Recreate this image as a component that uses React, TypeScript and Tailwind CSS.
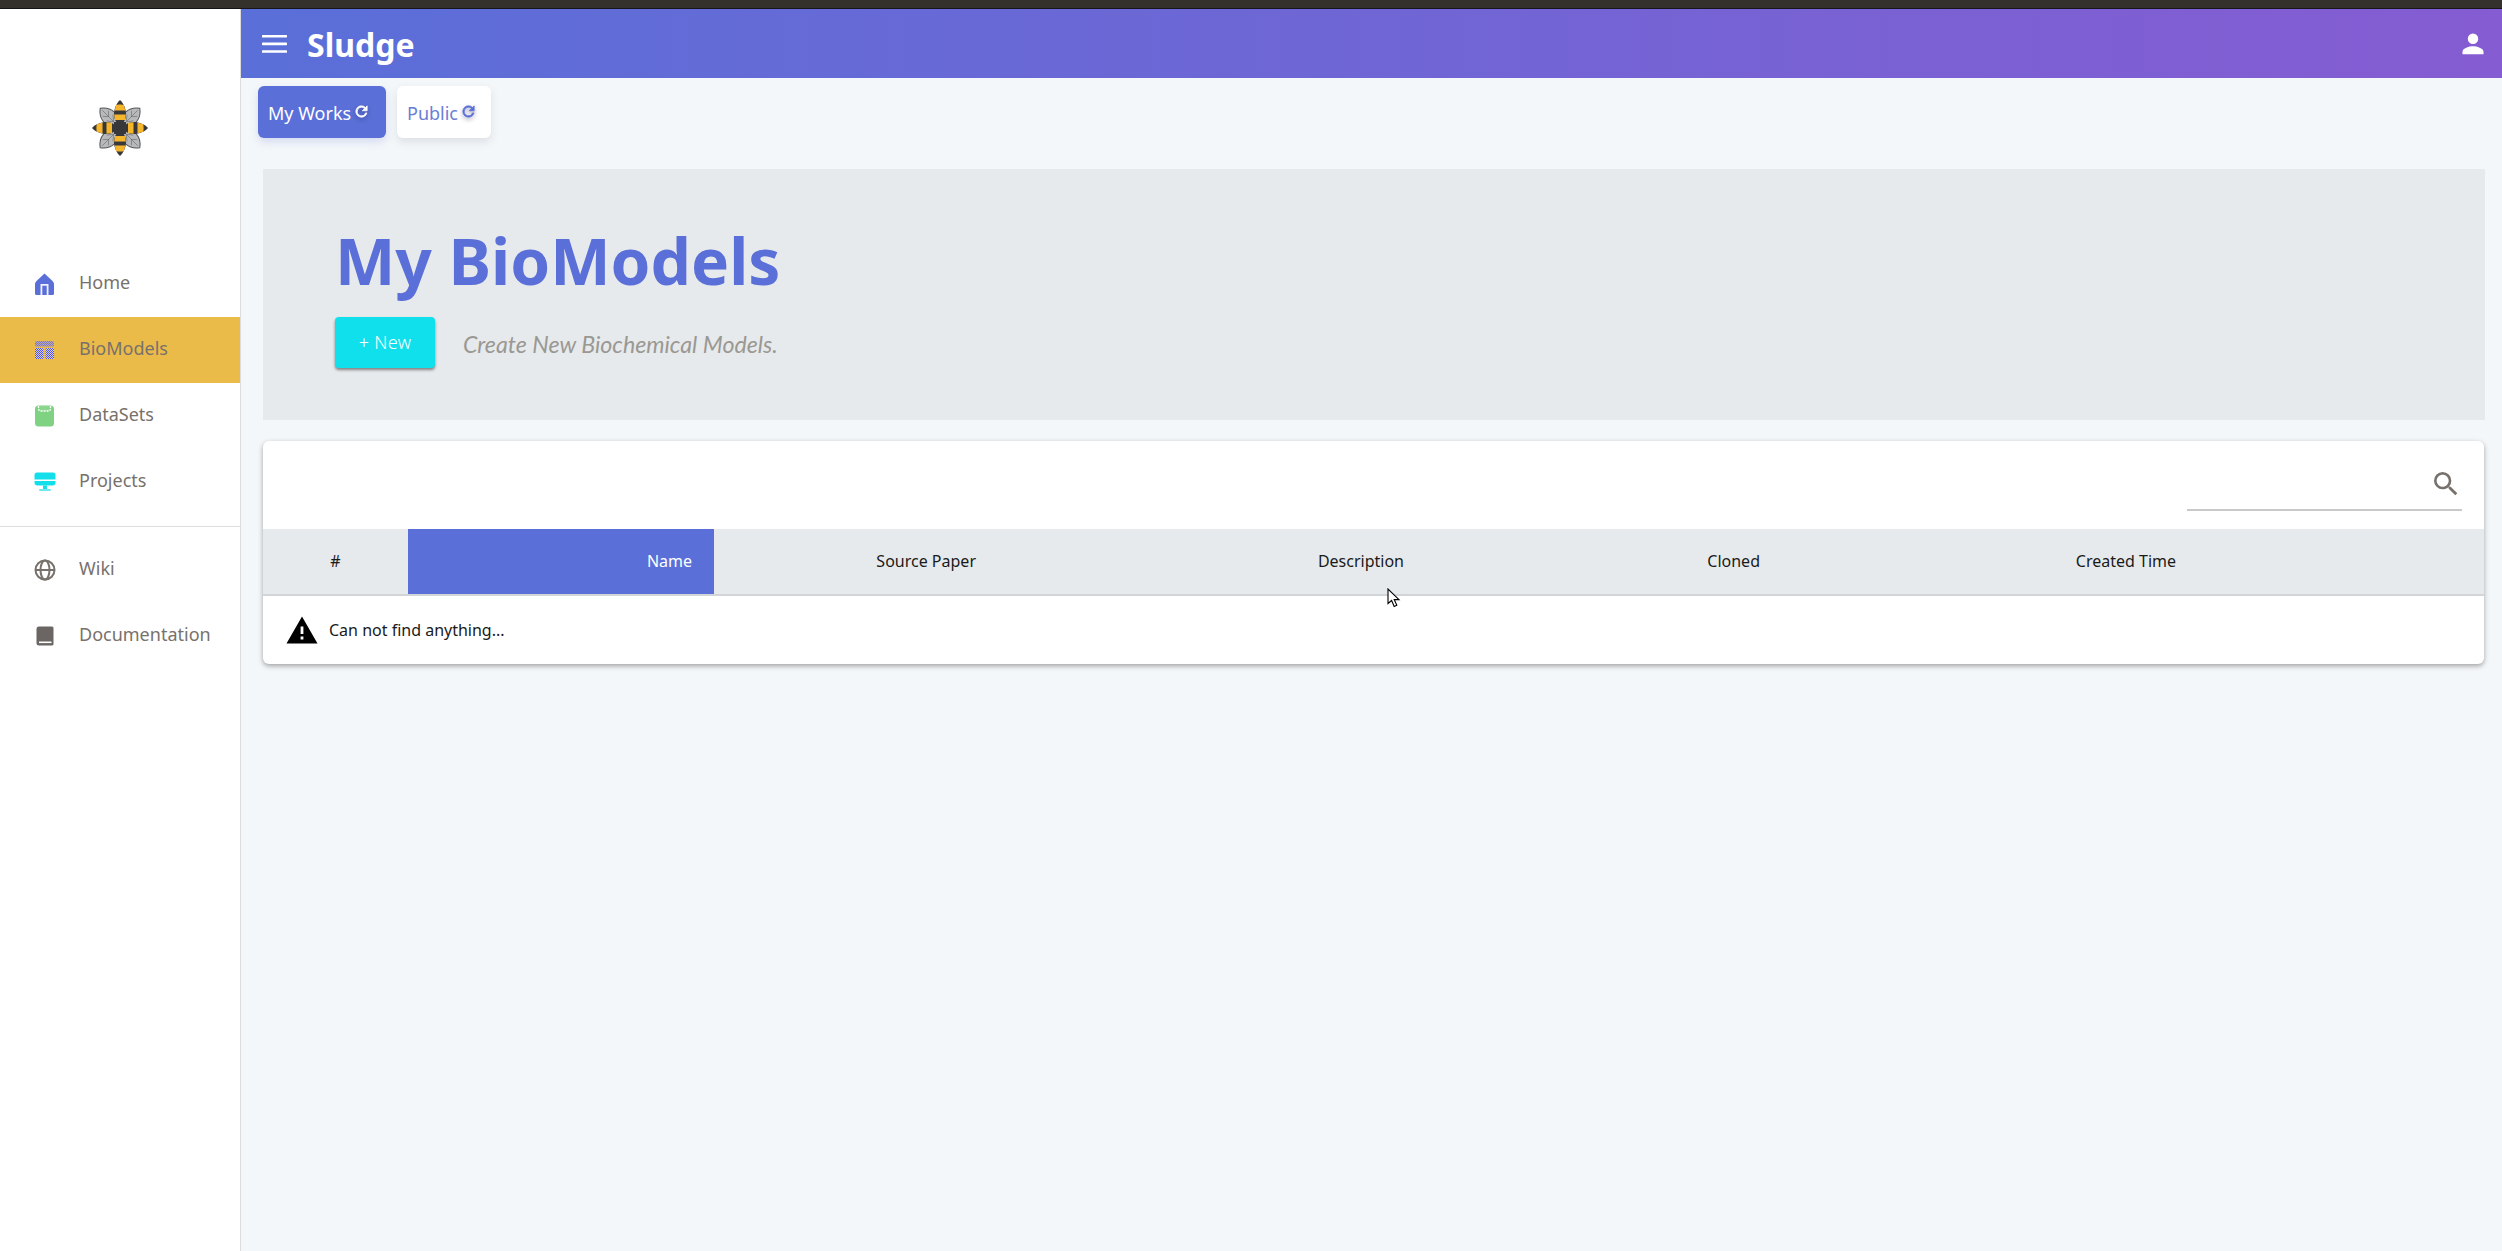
import React from "react";

const primary = "#5a6fd8";

function Bee({ rot }: { rot: number }) {
  return (
    <g transform={`rotate(${rot} 28 28)`}>
      <path d="M28 0 C31.5 3 34 9 34 14 C34 19 32 23 28 26 C24 23 22 19 22 14 C22 9 24.5 3 28 0Z" fill="#38383a" />
      <path d="M24.2 5 C25.5 4.2 30.5 4.2 31.8 5 L33.4 10.5 L22.6 10.5Z" fill="#f6b62c" />
      <path d="M22.2 14.5 L33.8 14.5 L33 20 L23 20Z" fill="#f6b62c" />
    </g>
  );
}

function Wing({ rot }: { rot: number }) {
  return (
    <g transform={`rotate(${rot} 28 28)`}>
      <path d="M28 27 C17 18 19.5 6 28 0 C36.5 6 39 18 28 27Z" fill="#b7b9bb" stroke="#55565a" strokeWidth="1" />
      <path d="M28 3 L28 24 M28 12 L24 7.5 M28 12 L32 7.5 M28 19 L23.5 13.5 M28 19 L32.5 13.5" stroke="#6a6b6e" strokeWidth="0.6" fill="none" />
    </g>
  );
}

function Logo() {
  return (
    <svg width="56" height="58" viewBox="0 0 56 56" className="block">
      {[45, 135, 225, 315].map((r) => (
        <Wing key={r} rot={r} />
      ))}
      {[0, 90, 180, 270].map((r) => (
        <Bee key={r} rot={r} />
      ))}
      <rect x="22" y="22" width="12" height="12" fill="#38383a" />
    </svg>
  );
}

function HomeIcon() {
  return (
    <svg width="21" height="23" viewBox="0 0 21 23">
      <path
        d="M10.5 0.5 L18.5 8 Q20 9.5 20 11 V20.5 Q20 22 18.5 22 H2.5 Q1 22 1 20.5 V11 Q1 9.5 2.5 8Z"
        fill={primary}
      />
      <path d="M6.5 22 V11 H14.5 V22 H12.7 V12.8 H8.3 V22Z" fill="#eef0fb" />
    </svg>
  );
}

function TableIcon() {
  return (
    <svg width="21" height="20" viewBox="0 0 21 20">
      <defs>
        <pattern id="ditherA" width="2" height="2" patternUnits="userSpaceOnUse">
          <rect width="2" height="2" fill="#b9a8a8" />
          <rect width="1" height="1" fill="#7f76c8" />
          <rect x="1" y="1" width="1" height="1" fill="#7f76c8" />
        </pattern>
        <pattern id="ditherB" width="2" height="2" patternUnits="userSpaceOnUse">
          <rect width="2" height="2" fill="#d8d0e4" />
          <rect width="1" height="1" fill="#4f50e8" />
          <rect x="1" y="1" width="1" height="1" fill="#4f50e8" />
        </pattern>
      </defs>
      <rect x="1" y="1" width="19" height="5.5" rx="1.5" fill="url(#ditherA)" />
      <rect x="1" y="8" width="8.5" height="11" rx="1.5" fill="url(#ditherB)" />
      <rect x="11.5" y="8" width="8.5" height="11" rx="1.5" fill="url(#ditherB)" />
    </svg>
  );
}

function ClipIcon() {
  return (
    <svg width="21" height="22" viewBox="0 0 21 22">
      <rect x="1" y="0.5" width="19" height="21" rx="3.5" fill="#80d283" />
      <path d="M4.5 1 V3.5 Q4.5 6 7 6 H14 Q16.5 6 16.5 3.5 V1" fill="#8ad68c" stroke="#ffffff" strokeWidth="1.3" strokeDasharray="2 1" />
    </svg>
  );
}

function MonitorIcon() {
  return (
    <svg width="22" height="20" viewBox="0 0 22 20">
      <path d="M3 0.5 H19 Q21.5 0.5 21.5 3 V7.5 H0.5 V3 Q0.5 0.5 3 0.5Z" fill="#12dfea" />
      <path d="M0.5 9 H21.5 V10.5 Q21.5 13.5 18.5 13.5 H3.5 Q0.5 13.5 0.5 10.5Z" fill="#12dfea" />
      <rect x="9" y="13.5" width="4" height="3.5" fill="#12dfea" />
      <rect x="5" y="17" width="12" height="2" rx="1" fill="#6fe9f0" />
    </svg>
  );
}

function GlobeIcon() {
  return (
    <svg width="22" height="22" viewBox="0 0 22 22" fill="none" stroke="#77716c" strokeWidth="2">
      <circle cx="11" cy="11" r="9.5" />
      <path d="M1.5 11 H20.5" />
      <ellipse cx="11" cy="11" rx="4.5" ry="9.5" />
    </svg>
  );
}

function BookIcon() {
  return (
    <svg width="18" height="20" viewBox="0 0 18 20">
      <path
        d="M3 0.5 H16 Q17.5 0.5 17.5 2 V18 Q17.5 19.5 16 19.5 H3 Q0.5 19.5 0.5 17 V3 Q0.5 0.5 3 0.5Z"
        fill="#6b6663"
      />
      <rect x="3" y="15.5" width="12.5" height="1.6" fill="#fff" />
    </svg>
  );
}

function Refresh({ color }: { color: string }) {
  return (
    <svg width="17" height="17" viewBox="0 0 24 24" className="drop-shadow-[0_2px_2px_rgba(40,40,90,0.45)]">
      <path
        fill={color}
        stroke={color}
        strokeWidth="1"
        d="M17.65 6.35A7.95 7.95 0 0 0 12 4a8 8 0 1 0 7.73 10h-2.08A6 6 0 1 1 12 6c1.66 0 3.14.69 4.22 1.78L13 11h7V4l-2.35 2.35z"
      />
    </svg>
  );
}

type Item = { label: string; icon: React.ReactNode; active?: boolean };

function NavRow({ label, icon, active }: Item) {
  return (
    <div className={`flex h-[66px] items-center ${active ? "bg-[#ebbb4a]" : ""}`}>
      <div className="flex w-[79px] justify-center pl-[10px]">{icon}</div>
      <span className="pb-[3px] text-[18px] text-[#77716c]">{label}</span>
    </div>
  );
}

const cols = [
  { label: "Source Paper", w: "w-[284px]" },
  { label: "Description", w: "w-[428px]" },
  { label: "Cloned", w: "w-[356px]" },
  { label: "Created Time", w: "w-[416px]" },
];

export default function App() {
  return (
    <div className="flex h-[1251px] w-[2502px] flex-col overflow-hidden bg-[#f4f7f9] font-['Noto_Sans',sans-serif]">
      <div className="h-[9px] shrink-0 border-b border-[#15151a] bg-[#34312c]" />
      <div className="flex min-h-0 flex-1">
        <aside className="flex w-[241px] shrink-0 flex-col border-r border-[#dcdcdc] bg-white">
          <div className="flex h-[242px] shrink-0 justify-center pt-[90px]">
            <Logo />
          </div>
          <nav>
            <NavRow label="Home" icon={<HomeIcon />} />
            <NavRow label="BioModels" icon={<TableIcon />} active />
            <NavRow label="DataSets" icon={<ClipIcon />} />
            <NavRow label="Projects" icon={<MonitorIcon />} />
          </nav>
          <div className="mt-[11px] mb-[10px] h-px bg-[#dedede]" />
          <nav>
            <NavRow label="Wiki" icon={<GlobeIcon />} />
            <NavRow label="Documentation" icon={<BookIcon />} />
          </nav>
        </aside>

        <main className="relative min-w-0 flex-1">
          <header className="flex h-[69px] items-center justify-between bg-[linear-gradient(90deg,#5a6fd8,#855cd2)] pr-[14px] pl-[21px] text-white">
            <div className="flex items-center gap-[20px]">
              <svg width="25" height="18" viewBox="0 0 25 18" fill="#fff">
                <rect width="25" height="2.6" rx="0.6" y="0" />
                <rect width="25" height="2.6" rx="0.6" y="7.6" />
                <rect width="25" height="2.6" rx="0.6" y="15.2" />
              </svg>
              <span className="pt-[2px] text-[32px] leading-none font-bold">Sludge</span>
            </div>
            <svg width="30" height="30" viewBox="0 0 24 24" fill="#fff">
              <path d="M12 12a4.2 4.2 0 1 0 0-8.4 4.2 4.2 0 0 0 0 8.4zm0 1.8c-3 0-8.4 1.5-8.4 4.4v2h16.8v-2c0-2.9-5.4-4.4-8.4-4.4z" />
            </svg>
          </header>

          <div className="flex gap-[11px] pt-[8px] pl-[17px]">
            <button className="flex h-[52px] w-[128px] items-center gap-[2px] rounded-[6px] bg-[#5a6fd8] pt-[2px] pl-[10px] text-[18px] text-white shadow-[0_4px_8px_rgba(90,111,216,0.2)]">
              My Works
              <span className="mb-[3px]">
                <Refresh color="#ffffff" />
              </span>
            </button>
            <button className="flex h-[52px] w-[94px] items-center gap-[2px] rounded-[6px] bg-white pt-[2px] pl-[10px] text-[18px] text-[#6a7dd6] shadow-[0_4px_8px_rgba(90,100,130,0.15)]">
              Public
              <span className="mb-[3px]">
                <Refresh color="#5a6fd8" />
              </span>
            </button>
          </div>

          <section className="mt-[31px] mr-[17px] ml-[22px] h-[251px] bg-[#e7eaec] pt-[58px] pl-[72px]">
            <h1 className="text-[64px] leading-[68px] font-bold text-[#5a6fd8]">My BioModels</h1>
            <div className="mt-[22px] flex items-center gap-[28px]">
              <button className="h-[51px] w-[100px] rounded-[4px] bg-[#10e0ec] text-[18px] font-light tracking-[0.3px] text-white shadow-[0_2px_3px_rgba(0,0,0,0.45)]">
                + New
              </button>
              <span className="mt-[4px] font-['Lato',sans-serif] text-[23.2px] text-[#9a9893] italic">
                Create New Biochemical Models.
              </span>
            </div>
          </section>

          <section className="mt-[21px] mr-[18px] ml-[22px] h-[223px] rounded-[6px] bg-white shadow-[0_2px_5px_rgba(0,0,0,0.35)]">
            <div className="flex h-[88px] justify-end px-[22px] pt-[18px]">
              <div className="flex h-[52px] w-[275px] items-center justify-end border-b-2 border-[#c9c9c9]">
                <svg width="32" height="32" viewBox="0 0 24 24" fill="#77716c">
                  <path d="M15.5 14h-.79l-.28-.27A6.47 6.47 0 0 0 16 9.5 6.5 6.5 0 1 0 9.5 16c1.61 0 3.09-.59 4.23-1.57l.27.28v.79l5 4.99L20.49 19l-4.99-5zm-6 0C7.01 14 5 11.99 5 9.5S7.01 5 9.5 5 14 7.01 14 9.5 11.99 14 9.5 14z" />
                </svg>
              </div>
            </div>
            <div className="flex h-[67px] border-b-2 border-[#d2d5d7] bg-[#e7eaec] text-[16px] text-[#1a1a1a]">
              <div className="flex w-[145px] items-center justify-center pb-[2px]">#</div>
              <div className="flex w-[306px] items-center justify-end bg-[#5a6fd8] pr-[22px] pb-[2px] text-white">Name</div>
              {cols.map((c) => (
                <div key={c.label} className={`flex ${c.w} items-center justify-end pr-[22px] pb-[2px]`}>
                  {c.label}
                </div>
              ))}
            </div>
            <div className="flex h-[68px] items-center gap-[11px] pl-[23px] text-[16px] text-[#1a1a1a]">
              <svg width="32" height="28" viewBox="0 0 32 28">
                <path
                  fillRule="evenodd"
                  d="M0.5 27.5 L16 0.5 L31.5 27.5Z M14.6 10.5 H17.4 V18 H14.6Z M14.6 20.5 H17.4 V23.5 H14.6Z"
                  fill="#000"
                />
              </svg>
              Can not find anything...
            </div>
          </section>

          <svg
            width="14"
            height="20"
            viewBox="0 0 14 20"
            className="absolute top-[579px] left-[1146px]"
          >
            <path d="M1 1 V15.5 L4.6 12.5 L7.2 18.5 L9.8 17.3 L7.2 11.6 H12Z" fill="#fff" stroke="#000" strokeWidth="1.1" />
          </svg>
        </main>
      </div>
    </div>
  );
}
